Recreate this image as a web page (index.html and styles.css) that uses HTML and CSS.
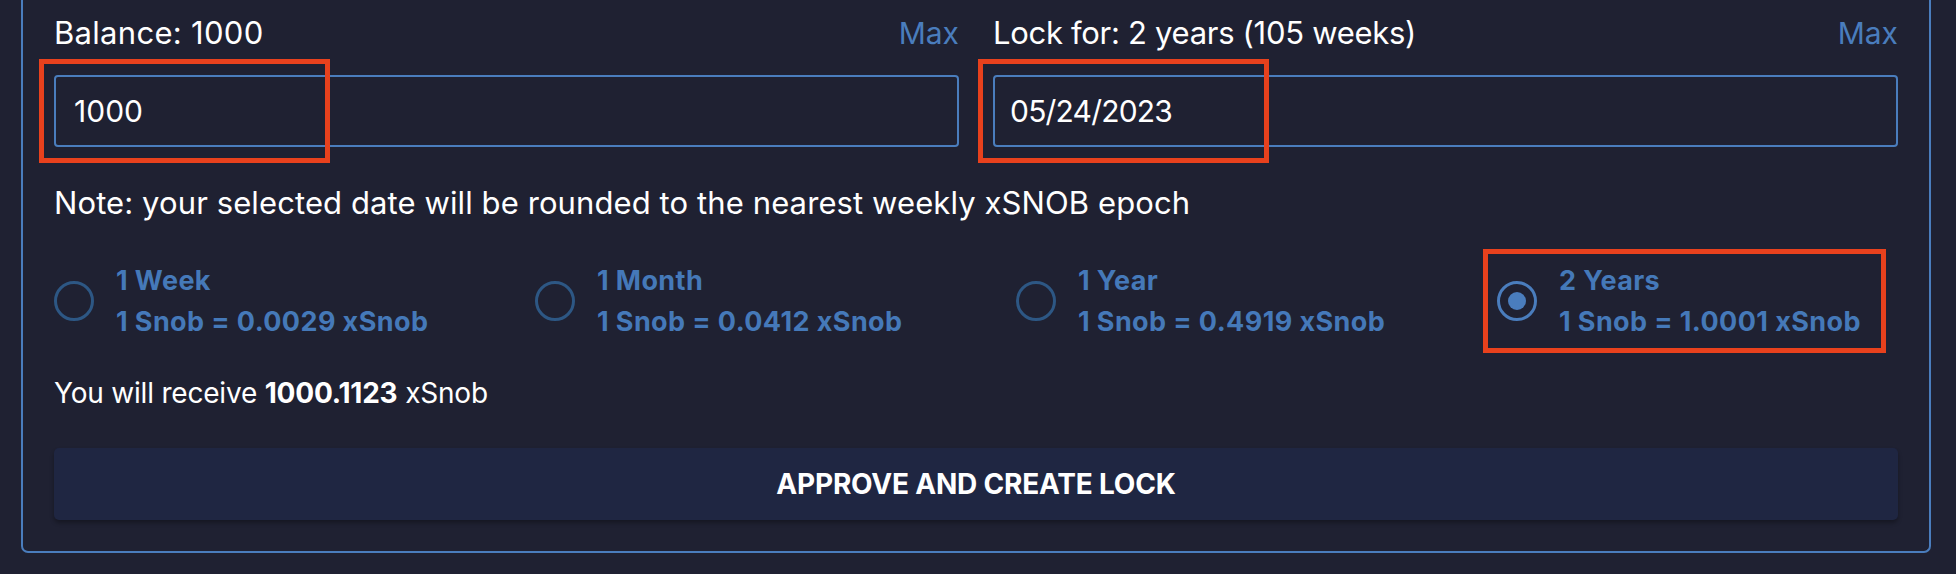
FILE: index.html
```html
<!DOCTYPE html>
<html lang="en">
<head>
<meta charset="utf-8">
<title>Create Lock</title>
<link rel="stylesheet" href="styles.css">
</head>
<body>
<div class="card">
  <div class="fields">
    <div class="field">
      <div class="field-head"><span class="label">Balance: 1000</span><span class="max">Max</span></div>
      <div class="input-wrap">
        <input class="input" type="text" value="1000">
        <span class="mark mark-input"></span>
      </div>
    </div>
    <div class="field">
      <div class="field-head"><span class="label label-tight">Lock for: 2 years (105 weeks)</span><span class="max">Max</span></div>
      <div class="input-wrap">
        <input class="input input-date" type="text" value="05/24/2023">
        <span class="mark mark-input"></span>
      </div>
    </div>
  </div>

  <p class="note">Note: your selected date will be rounded to the nearest weekly xSNOB epoch</p>

  <div class="options">
    <div class="option">
      <span class="radio"></span>
      <div class="option-text"><div>1 Week</div><div>1 Snob = 0.0029 xSnob</div></div>
    </div>
    <div class="option">
      <span class="radio"></span>
      <div class="option-text"><div>1 Month</div><div>1 Snob = 0.0412 xSnob</div></div>
    </div>
    <div class="option">
      <span class="radio"></span>
      <div class="option-text"><div>1 Year</div><div>1 Snob = 0.4919 xSnob</div></div>
    </div>
    <div class="option option-selected">
      <span class="radio radio-on"></span>
      <div class="option-text"><div>2 Years</div><div>1 Snob = 1.0001 xSnob</div></div>
      <span class="mark mark-option"></span>
    </div>
  </div>

  <p class="receive">You will receive <b>1000.1123</b> xSnob</p>

  <button class="btn" type="button">APPROVE AND CREATE LOCK</button>
</div>
</body>
</html>
```
FILE: styles.css
```css
* { box-sizing: border-box; }

html, body {
  margin: 0;
  padding: 0;
  background: #1f2132;
}

body {
  font-family: Inter, "Noto Sans", "DejaVu Sans", sans-serif;
  color: #ffffff;
  font-size: 31px;
  line-height: 36px;
}

.card {
  margin: 0 25px 0 21px;
  padding: 15px 31px 31px 31px;
  border: 2px solid #4a7dbd;
  border-top: 0;
  border-radius: 0 0 7px 7px;
}

.fields {
  display: grid;
  grid-template-columns: 1fr 1fr;
  column-gap: 34px;
}

.field-head {
  display: flex;
  justify-content: space-between;
  margin-bottom: 24px;
}

.label {
  letter-spacing: 0.3px;
}

.label-tight {
  letter-spacing: -0.3px;
}

.max {
  color: #4a7dbd;
  font-size: 30px;
}

.input-wrap {
  position: relative;
}

.input {
  display: block;
  width: 100%;
  height: 72px;
  margin: 0;
  padding: 0 18px;
  background: #1f2132;
  border: 2px solid #4a7dbd;
  border-radius: 4px;
  color: #ffffff;
  font: inherit;
  font-size: 30px;
  outline: none;
}

.input-date {
  padding-left: 15px;
  letter-spacing: -0.8px;
}

.mark {
  position: absolute;
  border: 5px solid #e8411d;
  pointer-events: none;
}

.mark-input {
  left: -15px;
  top: -16px;
  width: 291px;
  height: 104px;
}

.note {
  margin: 38px 0 0 0;
  letter-spacing: 0.1px;
}

.options {
  display: grid;
  grid-template-columns: repeat(4, 1fr);
  column-gap: 80px;
  margin-top: 39px;
}

.option {
  position: relative;
  display: flex;
  align-items: center;
  gap: 22px;
}

.radio {
  flex: none;
  width: 40px;
  height: 40px;
  border: 3px solid #2d5784;
  border-radius: 50%;
  display: flex;
  align-items: center;
  justify-content: center;
}

.radio-on {
  border-color: #4a7dbd;
}

.radio-on::after {
  content: "";
  width: 18px;
  height: 18px;
  border-radius: 50%;
  background: #4a7dbd;
}

.option-text {
  color: #4579b9;
  font-weight: 700;
  font-size: 27px;
  line-height: 41px;
  letter-spacing: 0.4px;
  white-space: nowrap;
}

.mark-option {
  left: -14px;
  top: -11px;
  width: 403px;
  height: 104px;
}

.receive {
  margin: 33px 0 0 0;
  font-size: 28px;
  letter-spacing: -0.2px;
}

.receive b {
  font-weight: 700;
}

.btn {
  display: flex;
  align-items: center;
  justify-content: center;
  width: 100%;
  height: 72px;
  margin-top: 37px;
  padding: 0;
  border: 0;
  border-radius: 5px;
  background: #1f2642;
  color: #ffffff;
  font-family: inherit;
  font-weight: 700;
  font-size: 28px;
  letter-spacing: -0.2px;
  box-shadow: 0 3px 4px rgba(0, 0, 0, 0.3);
}
```
